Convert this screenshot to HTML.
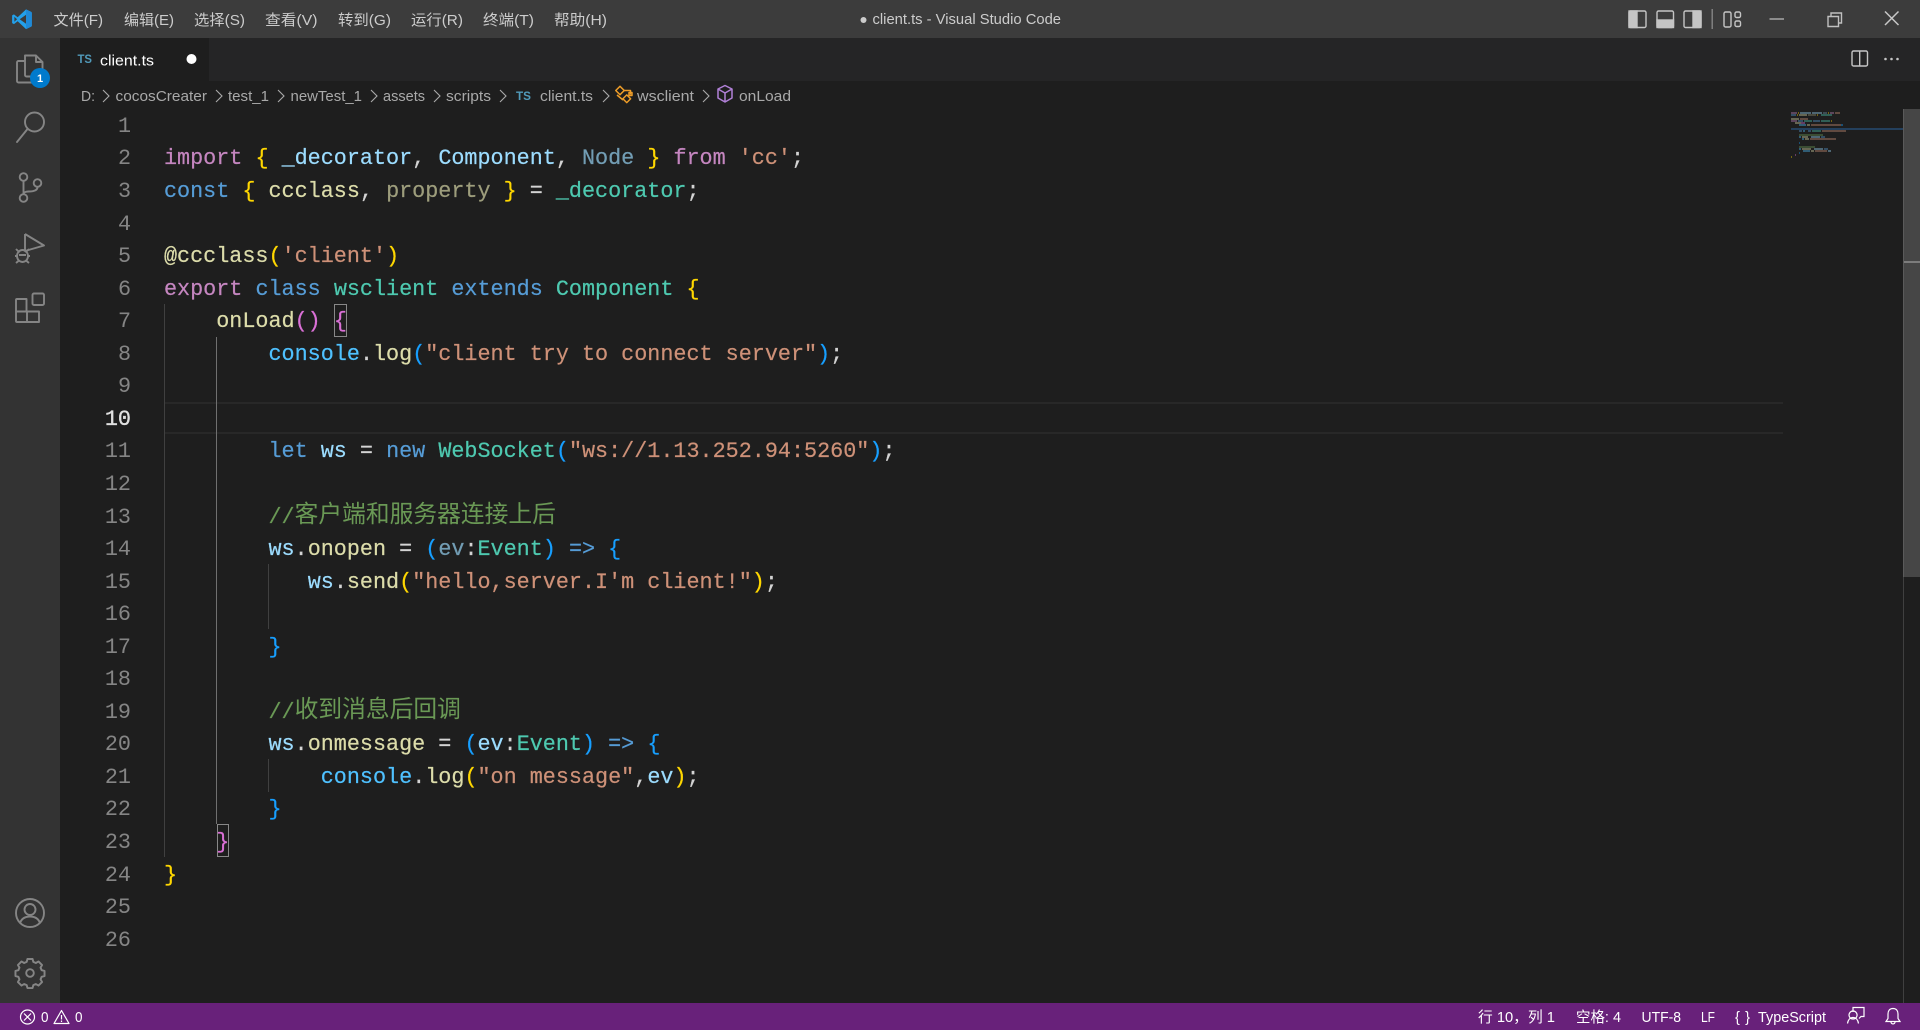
<!DOCTYPE html>
<html lang="zh-CN"><head><meta charset="utf-8"><title>client.ts - Visual Studio Code</title>
<style>
html,body{margin:0;padding:0;width:1920px;height:1030px;overflow:hidden;background:#1e1e1e}
.a{position:absolute}
#code,#nums{position:absolute;left:0;top:2.5px}
#code div{position:absolute;white-space:pre;height:32.55px;font:21.77px/32.55px "Liberation Mono",monospace;color:#d4d4d4;left:164px;-webkit-text-stroke:.2px}
#nums div{position:absolute;width:60px;left:71px;text-align:right;font:21.77px/32.55px "Liberation Mono",monospace;color:#858585}
.k{color:#c586c0}.b{color:#569cd6}.t{color:#4ec9b0}.v{color:#9cdcfe}.c{color:#4fc1ff}.f{color:#dcdcaa}.s{color:#ce9178}.m{color:#6a9955;position:relative;top:-4.5px}.g{color:#ffd700}.p{color:#da70d6}.u{color:#179fff}
.cj{font:23.75px/32.55px "Noto Sans CJK SC",sans-serif;position:relative;top:-1px;-webkit-text-stroke:0}
svg text{font-family:"Liberation Sans","Noto Sans CJK SC",sans-serif}
</style></head><body>
<div class="a" style="left:0;top:0;width:1920px;height:38px;background:#3c3c3c"></div>
<div class="a" style="left:0;top:38px;width:60px;height:965px;background:#333"></div>
<div class="a" style="left:60px;top:38px;width:1860px;height:43px;background:#252526"></div>
<div class="a" style="left:60px;top:38px;width:149px;height:43px;background:#1e1e1e"></div>
<div class="a" style="left:0;top:1003px;width:1920px;height:27px;background:#68217a"></div>

<!-- current line -->
<div class="a" style="left:165px;top:402px;width:1618px;height:28px;border-top:2px solid #282828;border-bottom:2px solid #282828"></div>
<!-- indent guides -->
<div class="a" style="left:164px;top:304px;width:1px;height:553px;background:#404040"></div>
<div class="a" style="left:216px;top:337px;width:1px;height:487px;background:#707070"></div>
<div class="a" style="left:268px;top:564px;width:1px;height:65px;background:#404040"></div>
<div class="a" style="left:268px;top:759px;width:1px;height:33px;background:#404040"></div>
<!-- bracket match -->
<div class="a" style="left:334px;top:304px;width:11px;height:31px;border:1px solid #888"></div>
<div class="a" style="left:217px;top:824px;width:10px;height:31px;border:1px solid #888"></div>

<div id="nums">
<div style="top:108.4px">1</div><div style="top:140.95px">2</div><div style="top:173.5px">3</div><div style="top:206.05px">4</div><div style="top:238.6px">5</div><div style="top:271.15px">6</div><div style="top:303.7px">7</div><div style="top:336.25px">8</div><div style="top:368.8px">9</div><div style="top:401.35px;color:#e0e0e0;-webkit-text-stroke:.3px">10</div><div style="top:433.9px">11</div><div style="top:466.45px">12</div><div style="top:499px">13</div><div style="top:531.55px">14</div><div style="top:564.1px">15</div><div style="top:596.65px">16</div><div style="top:629.2px">17</div><div style="top:661.75px">18</div><div style="top:694.3px">19</div><div style="top:726.85px">20</div><div style="top:759.4px">21</div><div style="top:791.95px">22</div><div style="top:824.5px">23</div><div style="top:857.05px">24</div><div style="top:889.6px">25</div><div style="top:922.15px">26</div>
</div>

<div id="code">
<div style="top:140.95px"><span class="k">import</span> <span class="g">{</span> <span class="v">_decorator</span>, <span class="v">Component</span>, <span class="v" style="opacity:.67">Node</span> <span class="g">}</span> <span class="k">from</span> <span class="s">'cc'</span>;</div>
<div style="top:173.5px"><span class="b">const</span> <span class="g">{</span> <span class="f">ccclass</span>, <span class="f" style="opacity:.67">property</span> <span class="g">}</span> = <span class="t">_decorator</span>;</div>
<div style="top:238.6px"><span class="f">@ccclass</span><span class="g">(</span><span class="s">'client'</span><span class="g">)</span></div>
<div style="top:271.15px"><span class="k">export</span> <span class="b">class</span> <span class="t">wsclient</span> <span class="b">extends</span> <span class="t">Component</span> <span class="g">{</span></div>
<div style="top:303.7px">    <span class="f">onLoad</span><span class="p">()</span> <span class="p">{</span></div>
<div style="top:336.25px">        <span class="c">console</span>.<span class="f">log</span><span class="u">(</span><span class="s">"client try to connect server"</span><span class="u">)</span>;</div>
<div style="top:433.9px">        <span class="b">let</span> <span class="v">ws</span> = <span class="b">new</span> <span class="t">WebSocket</span><span class="u">(</span><span class="s">"ws://1.13.252.94:5260"</span><span class="u">)</span>;</div>
<div style="top:499px">        <span class="m">//<span class="cj">客户端和服务器连接上后</span></span></div>
<div style="top:531.55px">        <span class="v">ws</span>.<span class="f">onopen</span> = <span class="u">(</span><span class="v" style="opacity:.67">ev</span>:<span class="t">Event</span><span class="u">)</span> <span class="b">=&gt;</span> <span class="u">{</span></div>
<div style="top:564.1px">           <span class="v">ws</span>.<span class="f">send</span><span class="g">(</span><span class="s">"hello,server.I'm client!"</span><span class="g">)</span>;</div>
<div style="top:629.2px">        <span class="u">}</span></div>
<div style="top:694.3px">        <span class="m">//<span class="cj">收到消息后回调</span></span></div>
<div style="top:726.85px">        <span class="v">ws</span>.<span class="f">onmessage</span> = <span class="u">(</span><span class="v">ev</span>:<span class="t">Event</span><span class="u">)</span> <span class="b">=&gt;</span> <span class="u">{</span></div>
<div style="top:759.4px">            <span class="c">console</span>.<span class="f">log</span><span class="g">(</span><span class="s">"on message"</span>,<span class="v">ev</span><span class="g">)</span>;</div>
<div style="top:791.95px">        <span class="u">}</span></div>
<div style="top:824.5px">    <span class="p">}</span></div>
<div style="top:857.05px"><span class="g">}</span></div>
</div>

<!-- scrollbar -->
<div class="a" style="left:1903px;top:577px;width:1px;height:426px;background:#404040"></div>
<div class="a" style="left:1903px;top:109px;width:17px;height:468px;background:#464646"></div>
<div class="a" style="left:1903px;top:109px;width:1px;height:468px;background:#5a5a5a"></div>
<div class="a" style="left:1904px;top:261px;width:16px;height:2px;background:#7c7c7c"></div>

<svg class="a" style="left:0;top:0" width="1920" height="1030" viewBox="0 0 1920 1030" fill="none">
<!-- logo -->
<g transform="translate(11.5,9) scale(.205)">
<path d="M71 2 L30 40 L12 26 L3 31 V69 L12 74 L30 60 L71 98 L96 86 Q99 84 99 81 V19 Q99 16 96 14 Z" fill="#23a0ea"/>
<path d="M71 28 L40 50 L71 72 Z" fill="#3c3c3c"/>
<path d="M14 38 L27 50 L14 62 Z" fill="#3c3c3c"/>
<path d="M71 2 L96 14 Q99 16 99 19 V81 Q99 84 96 86 L71 98 Z" fill="#1f8ad8"/>
</g>
<!-- menu -->
<g font-size="14.6" fill="#cccccc">
<text x="53.5" y="25" textLength="49.5" lengthAdjust="spacingAndGlyphs">文件(F)</text>
<text x="124" y="25" textLength="50" lengthAdjust="spacingAndGlyphs">编辑(E)</text>
<text x="194" y="25" textLength="51" lengthAdjust="spacingAndGlyphs">选择(S)</text>
<text x="265" y="25" textLength="52.5" lengthAdjust="spacingAndGlyphs">查看(V)</text>
<text x="338" y="25" textLength="53" lengthAdjust="spacingAndGlyphs">转到(G)</text>
<text x="411" y="25" textLength="52" lengthAdjust="spacingAndGlyphs">运行(R)</text>
<text x="483" y="25" textLength="51" lengthAdjust="spacingAndGlyphs">终端(T)</text>
<text x="554" y="25" textLength="53" lengthAdjust="spacingAndGlyphs">帮助(H)</text>
</g>
<!-- title -->
<circle cx="863.5" cy="20" r="3" fill="#ccc"/>
<text x="872.5" y="24" font-size="14.6" fill="#cccccc" textLength="188.5" lengthAdjust="spacingAndGlyphs">client.ts - Visual Studio Code</text>
<!-- layout buttons -->
<g stroke="#c5c5c5" stroke-width="1.4">
<rect x="1629" y="11" width="17" height="16.5" rx="1.5"/><rect x="1629" y="11" width="8" height="16.5" fill="#c5c5c5"/>
<rect x="1657" y="11" width="16.5" height="16.5" rx="1.5"/><rect x="1657" y="20" width="16.5" height="7.5" fill="#c5c5c5"/>
<rect x="1684" y="11" width="17" height="16.5" rx="1.5"/><rect x="1693" y="11" width="8" height="16.5" fill="#c5c5c5"/>
<rect x="1724" y="12" width="7" height="15" rx="1.5"/><rect x="1735" y="12" width="5.5" height="5.5" rx="1.5"/><rect x="1735" y="21" width="5.5" height="5.5" rx="1.5"/>
</g>
<rect x="1711.5" y="9" width="1.4" height="20" fill="#858585"/>
<path d="M1769.5 19H1784" stroke="#c0c0c0" stroke-width="1.2"/>
<path d="M1828 16.5h10.5v10H1828zM1831 16.5v-3.5h10.5v10h-3" stroke="#c0c0c0" stroke-width="1.4"/>
<path d="M1885 11.5l13.5 13.5M1898.5 11.5L1885 25" stroke="#c8c8c8" stroke-width="1.5"/>
<!-- split / more -->
<rect x="1852" y="51" width="15.5" height="15" rx="1.5" stroke="#c5c5c5" stroke-width="1.4"/><path d="M1859.7 51v15" stroke="#c5c5c5" stroke-width="1.4"/>
<g fill="#c5c5c5"><circle cx="1885.5" cy="59" r="1.3"/><circle cx="1891.5" cy="59" r="1.3"/><circle cx="1897.5" cy="59" r="1.3"/></g>
<!-- activity icons -->
<g stroke="#858585" stroke-width="1.9" stroke-linejoin="round">
<path d="M25 61V55.5h11l6.5 6.5V75a1.5 1.5 0 0 1-1.5 1.5H26.5A1.5 1.5 0 0 1 25 75z"/>
<path d="M36 55.500V62h6.500"/>
<path d="M25 61h-6.500a1.500 1.500 0 0 0-1.500 1.500V81a1.500 1.500 0 0 0 1.500 1.500H35V76.500"/>
<circle cx="34.500" cy="122" r="9.500"/><path d="M27.500 129L17 142" stroke-linecap="round"/>
<circle cx="23.500" cy="177" r="3.800"/><circle cx="37.500" cy="183" r="3.800"/><circle cx="23.500" cy="198" r="3.800"/>
<path d="M23.500 181V194M37.500 187c0 4-5 4.500-9 4.500-3 0-5 1-5 2.500"/>
<path d="M25 234V251L44 245.500 25 234"/>
<ellipse cx="22.500" cy="256" rx="5.500" ry="6"/>
<path d="M16 249l3.500 3.500M29 249l-3.500 3.500M15 256h2.500M27.500 256h2.500M16 263l3-2.500M29 263l-3-2.500M19 255h7"/>
<path d="M16 300a1 1 0 0 1 1-1h9.500v12.500h12.500V322H17a1 1 0 0 1-1-1zM16 311.500h23M27 311.500V322"/>
<rect x="32.500" y="293.500" width="11.500" height="11.500" rx="1.500"/>
<circle cx="30" cy="913" r="14"/><circle cx="30" cy="909.500" r="5.500"/><path d="M20 923c1.500-4 5-6.500 10-6.500s8.500 2.500 10 6.500"/>
<circle cx="30" cy="973" r="3.800"/>
<path stroke-width="2.300" transform="translate(30 973) scale(.85) translate(-30 -974.500)" d="M27 958h6l.9 3.400 3 1.300 3.100-1.800 4.200 4.200-1.800 3.100 1.300 3 3.400.9v6l-3.400.9-1.300 3 1.800 3.100-4.200 4.200-3.100-1.800-3 1.300-.9 3.400h-6l-.9-3.400-3-1.300-3.100 1.800-4.200-4.200 1.800-3.100-1.300-3-3.400-.9v-6l3.400-.9 1.300-3-1.800-3.100 4.200-4.200 3.100 1.800 3-1.300z"/>
</g>
<circle cx="40" cy="78" r="10" fill="#007acc"/>
<text x="40" y="82" font-size="11" font-weight="bold" fill="#fff" text-anchor="middle">1</text>
<!-- tab -->
<text x="77.5" y="63" font-size="11.500" font-weight="bold" fill="#519aba" textLength="14.500" lengthAdjust="spacingAndGlyphs">TS</text>
<text x="100" y="65.500" font-size="15" fill="#ffffff" textLength="54" lengthAdjust="spacingAndGlyphs">client.ts</text>
<circle cx="191.500" cy="59" r="5" fill="#fff"/>
<!-- breadcrumbs -->
<g font-size="14.600" fill="#a9a9a9">
<text x="81" y="101" textLength="14" lengthAdjust="spacingAndGlyphs">D:</text>
<text x="115.500" y="101" textLength="91.500" lengthAdjust="spacingAndGlyphs">cocosCreater</text>
<text x="228" y="101" textLength="41" lengthAdjust="spacingAndGlyphs">test_1</text>
<text x="290.500" y="101" textLength="71.500" lengthAdjust="spacingAndGlyphs">newTest_1</text>
<text x="383" y="101" textLength="42" lengthAdjust="spacingAndGlyphs">assets</text>
<text x="446" y="101" textLength="45" lengthAdjust="spacingAndGlyphs">scripts</text>
<text x="540" y="101" textLength="53" lengthAdjust="spacingAndGlyphs">client.ts</text>
<text x="637" y="101" textLength="57" lengthAdjust="spacingAndGlyphs">wsclient</text>
<text x="739" y="101" textLength="52" lengthAdjust="spacingAndGlyphs">onLoad</text>
</g>
<text x="516" y="100" font-size="11.500" font-weight="bold" fill="#519aba" textLength="15" lengthAdjust="spacingAndGlyphs">TS</text>
<g stroke="#a9a9a9" stroke-width="1.100">
<path d="M103 90l6 6-6 6M216 90l6 6-6 6M278 90l6 6-6 6M371 90l6 6-6 6M434 90l6 6-6 6M500 90l6 6-6 6M603 90l6 6-6 6M703 90l6 6-6 6"/>
</g>
<g stroke="#ee9d28" stroke-width="1.500" stroke-linejoin="round">
<rect x="-3" y="-3" width="6" height="6" transform="translate(620 90.500) rotate(45)"/>
<rect x="624" y="96" width="5.500" height="5.500" transform="rotate(45 626.750 98.750)"/>
<path d="M617 95l6 5M624 90.500h6.500v4"/><rect x="629" y="92.500" width="3" height="3"/>
</g>
<g stroke="#b180d7" stroke-width="1.500" stroke-linejoin="round">
<path d="M725 85.500l7 3.500v9l-7 4-7-4v-9zM718 89l7 4 7-4M725 93v9"/>
</g>
<!-- status bar -->
<g stroke="#fff" stroke-width="1.200">
<circle cx="27.500" cy="1017" r="7"/><path d="M24 1013.500l7 7M31 1013.500l-7 7"/>
<path d="M61.500 1010.500l7.500 13H54z" stroke-linejoin="round"/><path d="M61.500 1015v4.500M61.500 1020.500v1.500"/>
<path d="M1851 1015.500a4 4 0 1 0 .1 0M1845.500 1028c.5-3.500 2.500-6 5.500-6s5 2.500 5.500 6" transform="translate(2 -4.500)"/>
<path d="M1853 1012v-4.500h11v9h-3l-2 2"/>
<path d="M1893 1008.500c-3.500 0-5 2.500-5 5.500v4.500l-2 3h14l-2-3V1014c0-3-1.500-5.500-5-5.500zM1891 1022c0 2.500 4 2.500 4 0"/>
</g>
<g font-size="14.600" fill="#ffffff">
<text x="41" y="1022" textLength="7.500" lengthAdjust="spacingAndGlyphs">0</text>
<text x="75" y="1022" textLength="7.500" lengthAdjust="spacingAndGlyphs">0</text>
<text x="1478" y="1022" textLength="77" lengthAdjust="spacingAndGlyphs">行 10，列 1</text>
<text x="1576" y="1022" textLength="45" lengthAdjust="spacingAndGlyphs">空格: 4</text>
<text x="1641.500" y="1022" textLength="39.500" lengthAdjust="spacingAndGlyphs">UTF-8</text>
<text x="1701" y="1022" textLength="14" lengthAdjust="spacingAndGlyphs">LF</text>
<text x="1735" y="1022" textLength="15" lengthAdjust="spacing">{ }</text>
<text x="1758" y="1022" textLength="68" lengthAdjust="spacingAndGlyphs">TypeScript</text>
</g>
<!-- minimap -->
<rect x="1791" y="128" width="112" height="2" fill="#264f78" opacity=".7"/>
<g opacity=".38">
<g transform="translate(1791,112)"><rect x="0" width="6" height="2" fill="#c586c0"/><rect x="7" width="1" height="2" fill="#ffd700"/><rect x="9" width="11" height="2" fill="#9cdcfe"/><rect x="21" width="10" height="2" fill="#9cdcfe"/><rect x="32" width="4" height="2" fill="#6f93a8"/><rect x="37" width="1" height="2" fill="#ffd700"/><rect x="39" width="4" height="2" fill="#c586c0"/><rect x="44" width="5" height="2" fill="#ce9178"/></g>
<g transform="translate(1791,114)"><rect x="0" width="5" height="2" fill="#569cd6"/><rect x="6" width="1" height="2" fill="#ffd700"/><rect x="8" width="8" height="2" fill="#dcdcaa"/><rect x="17" width="8" height="2" fill="#8f8f70"/><rect x="26" width="1" height="2" fill="#ffd700"/><rect x="30" width="11" height="2" fill="#4ec9b0"/></g>
<g transform="translate(1791,118)"><rect x="0" width="8" height="2" fill="#dcdcaa"/><rect x="9" width="8" height="2" fill="#ce9178"/></g>
<g transform="translate(1791,120)"><rect x="0" width="6" height="2" fill="#c586c0"/><rect x="7" width="5" height="2" fill="#569cd6"/><rect x="13" width="8" height="2" fill="#4ec9b0"/><rect x="22" width="7" height="2" fill="#569cd6"/><rect x="30" width="9" height="2" fill="#4ec9b0"/><rect x="40" width="1" height="2" fill="#ffd700"/></g>
<g transform="translate(1791,122)"><rect x="4" width="6" height="2" fill="#dcdcaa"/><rect x="10" width="4" height="2" fill="#da70d6"/></g>
<g transform="translate(1791,124)"><rect x="8" width="7" height="2" fill="#4fc1ff"/><rect x="16" width="3" height="2" fill="#dcdcaa"/><rect x="20" width="30" height="2" fill="#ce9178"/><rect x="50" width="2" height="2" fill="#179fff"/></g>
<g transform="translate(1791,130)"><rect x="8" width="3" height="2" fill="#569cd6"/><rect x="12" width="2" height="2" fill="#4fc1ff"/><rect x="17" width="3" height="2" fill="#569cd6"/><rect x="21" width="9" height="2" fill="#4ec9b0"/><rect x="31" width="24" height="2" fill="#ce9178"/></g>
<g transform="translate(1791,134)"><rect x="8" width="24" height="2" fill="#6a9955"/></g>
<g transform="translate(1791,136)"><rect x="8" width="2" height="2" fill="#4fc1ff"/><rect x="11" width="6" height="2" fill="#dcdcaa"/><rect x="20" width="9" height="2" fill="#9cdcfe"/><rect x="30" width="4" height="2" fill="#569cd6"/></g>
<g transform="translate(1791,138)"><rect x="11" width="2" height="2" fill="#4fc1ff"/><rect x="14" width="4" height="2" fill="#dcdcaa"/><rect x="19" width="26" height="2" fill="#ce9178"/></g>
<g transform="translate(1791,142)"><rect x="8" width="1" height="2" fill="#179fff"/></g>
<g transform="translate(1791,146)"><rect x="8" width="16" height="2" fill="#6a9955"/></g>
<g transform="translate(1791,148)"><rect x="8" width="2" height="2" fill="#4fc1ff"/><rect x="11" width="9" height="2" fill="#dcdcaa"/><rect x="23" width="9" height="2" fill="#9cdcfe"/><rect x="33" width="4" height="2" fill="#569cd6"/></g>
<g transform="translate(1791,150)"><rect x="12" width="7" height="2" fill="#4fc1ff"/><rect x="20" width="3" height="2" fill="#dcdcaa"/><rect x="24" width="12" height="2" fill="#ce9178"/><rect x="37" width="3" height="2" fill="#9cdcfe"/></g>
<g transform="translate(1791,152)"><rect x="8" width="1" height="2" fill="#179fff"/></g>
<g transform="translate(1791,154)"><rect x="4" width="1" height="2" fill="#da70d6"/></g>
<g transform="translate(1791,156)"><rect x="0" width="1" height="2" fill="#ffd700"/></g>
</g>
</svg>
</body></html>
